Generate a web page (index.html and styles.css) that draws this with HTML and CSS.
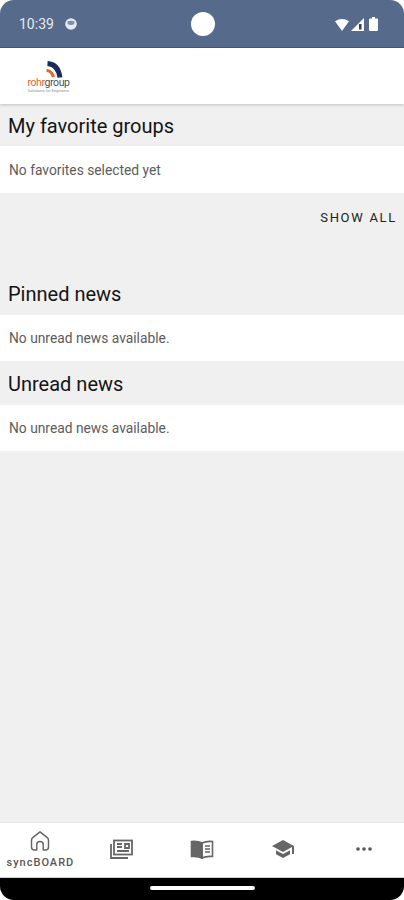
FILE: index.html
```html
<!DOCTYPE html>
<html lang="en">
<head>
    <meta charset="UTF-8">
    <meta name="viewport" content="width=device-width, initial-scale=1.0">
    <title>syncBOARD</title>
    <link rel="stylesheet" href="styles.css">
</head>
<body>
    <div class="screen">
        <div class="status-bar">
            <div class="status-left">
                <span class="clock">10:39</span>
                <svg class="status-app" viewBox="0 0 12 12" width="12" height="12">
                    <circle cx="6" cy="6" r="5.8" fill="#e6e9ef"/>
                    <path d="M2.4 3.6 Q6 1.8 9.6 3.6 L9.2 6.2 Q6 7.6 2.8 6.2 Z" fill="#7f8ea9"/>
                </svg>
            </div>
            <div class="camera"></div>
            <div class="status-right">
                <svg viewBox="0 0 14 13" width="14" height="13"><path d="M0 3.2 Q7 -1 14 3.2 L7 13 Z" fill="#fff"/></svg>
                <svg viewBox="0 0 13 13" width="13" height="13"><path d="M13 0 V13 H0 Z" fill="#fff"/><rect x="8" y="6" width="2.5" height="5.5" fill="#2c3e63"/></svg>
                <svg class="battery" viewBox="0 0 9 14" width="9" height="14"><path d="M3 0 H6 V1.5 H8 Q9 1.5 9 2.5 V13 Q9 14 8 14 H1 Q0 14 0 13 V2.5 Q0 1.5 1 1.5 H3 Z" fill="#fff"/></svg>
            </div>
        </div>

        <header class="app-bar">
            <div class="logo">
                <svg class="logo-mark" viewBox="0 0 17 17" width="17" height="17">
                    <path d="M1.5 2.5 Q12 3 14 16.5" fill="none" stroke="#1c2a5c" stroke-width="5"/>
                    <path d="M0.5 9.5 Q5.5 9.5 7.5 16" fill="none" stroke="#e2682e" stroke-width="3.2"/>
                </svg>
                <div class="logo-word"><span class="rohr">rohr</span><span class="group">group</span></div>
                <div class="logo-tag">Solutions for Engineers</div>
            </div>
        </header>

        <main class="content">
            <h2 class="section-title">My favorite groups</h2>
            <div class="card">No favorites selected yet</div>
            <div class="show-all">SHOW ALL</div>

            <h2 class="section-title pinned">Pinned news</h2>
            <div class="card short">No unread news available.</div>

            <h2 class="section-title unread">Unread news</h2>
            <div class="card short">No unread news available.</div>
        </main>

        <nav class="tab-bar">
            <div class="tab active">
                <svg class="tab-icon" viewBox="0 0 24 24" width="24" height="24" fill="none" stroke="#666" stroke-width="1.5">
                    <path d="M3.5 11 Q3.5 9.5 5 8.4 L12 2.8 L19 8.4 Q20.5 9.5 20.5 11 V18 Q20.5 21 17.5 21 H15.2 V15.5 Q15.2 12.6 12 12.6 Q8.8 12.6 8.8 15.5 V21 H6.5 Q3.5 21 3.5 18 Z" stroke-linejoin="round"/>
                </svg>
                <span class="tab-label">syncBOARD</span>
            </div>
            <div class="tab">
                <svg viewBox="0 0 24 24" width="24" height="24" fill="none" stroke="#666" stroke-width="1.8">
                    <rect x="5" y="3.5" width="18" height="14"/>
                    <path d="M2 7 V21 H19"/>
                    <path d="M8 7 H13 M8 10 H13 M8 14 H20 M16 7 H20 V11 H16 Z"/>
                </svg>
            </div>
            <div class="tab">
                <svg viewBox="0 0 24 24" width="24" height="24" fill="none" stroke="#666" stroke-width="1.6">
                    <path d="M12 6 Q8 4 1.5 4.5 V19.5 Q8 19 12 21 Z" fill="#666"/>
                    <path d="M12 6 Q16 4 22.5 4.5 V19.5 Q16 19 12 21 Z"/>
                    <path d="M15 9 H20 M15 12 H20 M15 15 H20" stroke-width="1.3"/>
                </svg>
            </div>
            <div class="tab">
                <svg viewBox="0 0 24 24" width="24" height="24" fill="#666">
                    <path d="M12 3 L1 9 L12 15 L21 10.1 V17 H23 V9 Z"/>
                    <path d="M5 13.2 V17.2 L12 21 L19 17.2 V13.2 L12 17 Z"/>
                </svg>
            </div>
            <div class="tab">
                <svg viewBox="0 0 24 24" width="24" height="24" fill="#555">
                    <circle cx="6" cy="12" r="1.8"/>
                    <circle cx="12" cy="12" r="1.8"/>
                    <circle cx="18" cy="12" r="1.8"/>
                </svg>
            </div>
        </nav>

        <div class="gesture-bar"><div class="gesture-pill"></div></div>
    </div>
</body>
</html>
```
FILE: styles.css
```css
* {
    box-sizing: border-box;
}

body {
    margin: 0;
    background: #fff;
    font-family: Roboto, "Liberation Sans", sans-serif;
}

.screen {
    width: 404px;
    height: 900px;
    display: flex;
    flex-direction: column;
    background: #f0f0f0;
    border-radius: 14px;
    overflow: hidden;
}

.status-bar {
    height: 48px;
    flex: none;
    display: grid;
    grid-template-columns: 1fr auto 1fr;
    align-items: center;
    padding: 0 17px 0 19px;
    background: #566a8c;
    border-bottom: 1px solid #45587a;
}

.status-left {
    display: flex;
    align-items: center;
    gap: 11px;
}

.clock {
    font-size: 14px;
    color: #e6e9ef;
}

.camera {
    width: 24px;
    height: 24px;
    border-radius: 50%;
    background: #fff;
}

.status-right {
    display: flex;
    align-items: center;
    justify-content: flex-end;
    gap: 2px;
    padding: 1px 9px 0 0;
}

.battery {
    margin-left: 3px;
}

.app-bar {
    height: 56px;
    flex: none;
    display: flex;
    align-items: center;
    padding-left: 26px;
    background: #fff;
    box-shadow: 0 1px 3px rgba(0, 0, 0, 0.2);
    position: relative;
}

.logo {
    width: 45px;
    display: flex;
    flex-direction: column;
    align-items: center;
    padding-top: 3px;
}

.logo-mark {
    margin: 0 0 -1px 11px;
}

.logo-word {
    font-size: 10.5px;
    line-height: 11px;
    letter-spacing: -0.4px;
}

.rohr {
    color: #e2682e;
}

.group {
    color: #4a5162;
}

.logo-tag {
    font-size: 4px;
    line-height: 6px;
    color: #8a8f9c;
    white-space: nowrap;
}

.content {
    flex: 1;
}

.section-title {
    margin: 0;
    height: 42px;
    padding: 9px 8px 0;
    font-size: 20px;
    line-height: 26px;
    font-weight: 400;
    color: #141414;
}

.section-title.pinned {
    height: 46px;
    padding-top: 12px;
}

.section-title.unread {
    height: 44px;
    padding-top: 10px;
}

.card {
    height: 47px;
    padding: 0 9px;
    display: flex;
    align-items: center;
    background: #fff;
    font-size: 13.8px;
    color: #5c5c5c;
}

.card.short {
    height: 46px;
}

.show-all {
    height: 76px;
    padding: 16px 7px 0 0;
    text-align: right;
    font-size: 13px;
    line-height: 18px;
    letter-spacing: 1.7px;
    color: #222;
}

.tab-bar {
    height: 56px;
    flex: none;
    display: grid;
    grid-template-columns: repeat(5, 1fr);
    background: #fff;
    border-top: 1px solid #e6e6e6;
    border-bottom: 1px solid #ccc;
}

.tab {
    display: flex;
    flex-direction: column;
    align-items: center;
    justify-content: center;
    padding-bottom: 2px;
}

.tab-icon {
    margin-bottom: 4px;
}

.tab-label {
    font-size: 11px;
    line-height: 12px;
    font-weight: 500;
    letter-spacing: 1px;
    color: #555;
}

.gesture-bar {
    height: 22px;
    flex: none;
    padding-top: 8px;
    display: flex;
    justify-content: center;
    background: #000;
}

.gesture-pill {
    width: 105px;
    height: 4px;
    border-radius: 2px;
    background: #fff;
}
```
